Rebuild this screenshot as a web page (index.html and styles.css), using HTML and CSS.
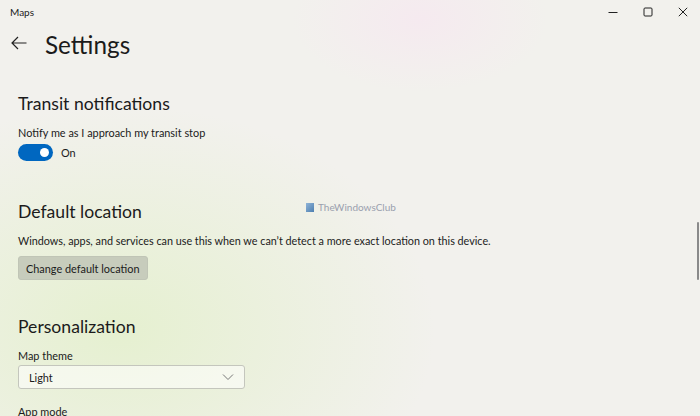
FILE: index.html
```html
<!DOCTYPE html>
<html>

<head lang="en">
    <meta charset="UTF-8">
    <title>Maps</title>
    <link rel="stylesheet" href="styles.css">
</head>

<body>
<div class="window">
    <!-- 标题栏 -->
    <div class="titlebar">
        <span class="app-name">Maps</span>
        <div class="controls">
            <span class="ctl">
                <svg width="10" height="10" viewBox="0 0 10 10"><path d="M0.5 5.5h9" stroke="#222" stroke-width="1"/></svg>
            </span>
            <span class="ctl">
                <svg width="10" height="10" viewBox="0 0 10 10"><rect x="1" y="1" width="8" height="8" rx="1" fill="none" stroke="#222" stroke-width="1"/></svg>
            </span>
            <span class="ctl">
                <svg width="10" height="10" viewBox="0 0 10 10"><path d="M0.8 0.8l8.4 8.4M9.2 0.8l-8.4 8.4" stroke="#222" stroke-width="1"/></svg>
            </span>
        </div>
    </div>

    <!-- 页头 -->
    <div class="header">
        <svg class="back" width="16" height="14" viewBox="0 0 16 14">
            <path d="M15.5 7H1M7 1L1 7l6 6" fill="none" stroke="#222" stroke-width="1.2"/>
        </svg>
        <h1>Settings</h1>
    </div>

    <div class="content">
        <h2 class="first">Transit notifications</h2>
        <p class="label">Notify me as I approach my transit stop</p>
        <div class="toggle-row">
            <span class="toggle"><span class="knob"></span></span>
            <span>On</span>
        </div>

        <h2 class="loc">Default location</h2>
        <p class="desc">Windows, apps, and services can use this when we can’t detect a more exact location on this device.</p>
        <button class="btn">Change default location</button>

        <h2 class="pers">Personalization</h2>
        <p class="label">Map theme</p>
        <div class="select">
            <span>Light</span>
            <svg width="12" height="8" viewBox="0 0 12 8"><path d="M1 1.5l5 5 5-5" fill="none" stroke="#777" stroke-width="1"/></svg>
        </div>
        <p class="label next">App mode</p>
    </div>

    <!-- 水印 -->
    <div class="watermark">
        <span class="wm-icon"></span>
        <span>TheWindowsClub</span>
    </div>

    <div class="scrollbar"></div>
</div>
</body>

</html>
```

FILE: styles.css
```css
* {
    padding: 0;
    margin: 0;
    box-sizing: border-box;
}

body {
    width: 700px;
    height: 416px;
    overflow: hidden;
    font-family: Lato, "Noto Sans", sans-serif;
    color: #1b1b1b;
}

.window {
    position: relative;
    width: 700px;
    height: 416px;
    overflow: hidden;
    background:
        radial-gradient(ellipse 420px 300px at 120px 330px, rgba(228, 240, 205, 0.9), rgba(228, 240, 205, 0) 75%),
        radial-gradient(ellipse 160px 90px at 420px 20px, rgba(246, 232, 240, 0.8), rgba(246, 232, 240, 0) 80%),
        #f2f1ed;
}

.titlebar {
    display: flex;
    justify-content: space-between;
    align-items: center;
    height: 24px;
}

.app-name {
    font-size: 10px;
    padding-left: 10px;
}

.controls {
    display: flex;
}

.ctl {
    display: flex;
    justify-content: center;
    align-items: center;
    width: 35px;
    height: 24px;
}

.header {
    display: flex;
    align-items: center;
    height: 40px;
    padding-left: 11px;
}

.back {
    margin-top: -2px;
}

.header h1 {
    font-weight: 400;
    font-size: 24.3px;
    margin-left: 18px;
}

.content {
    padding-left: 18px;
}

h2 {
    font-weight: 400;
    font-size: 17.6px;
    line-height: 24px;
}

h2.first {
    margin-top: 28px;
}

h2.loc {
    margin-top: 39px;
}

h2.pers {
    margin-top: 35px;
}

.label {
    font-size: 10.9px;
    line-height: 16px;
    margin-top: 9px;
}

.toggle-row {
    display: flex;
    align-items: center;
    font-size: 10.9px;
    margin-top: 3px;
}

.toggle {
    display: flex;
    align-items: center;
    justify-content: flex-end;
    width: 35px;
    height: 17px;
    border-radius: 9px;
    background: #0067c0;
    padding-right: 4px;
    margin-right: 8px;
}

.knob {
    width: 9px;
    height: 9px;
    border-radius: 50%;
    background: #fff;
}

.desc {
    font-size: 10.8px;
    line-height: 16px;
    margin-top: 9px;
}

.btn {
    display: block;
    margin-top: 7px;
    height: 24px;
    padding: 0 7px;
    border: 1px solid #c0c5b6;
    border-radius: 3px;
    background: #c7ccbc;
    font-family: inherit;
    font-size: 10.9px;
    color: #1b1b1b;
}

.select {
    display: flex;
    justify-content: space-between;
    align-items: center;
    width: 227px;
    height: 24px;
    margin-top: 1px;
    padding: 0 10px;
    border: 1px solid #c4c6bd;
    border-radius: 3px;
    background: rgba(255, 255, 255, 0.55);
    font-size: 10.9px;
}

.label.next {
    margin-top: 15px;
}

.watermark {
    position: absolute;
    left: 306px;
    top: 201px;
    display: flex;
    align-items: center;
    font-size: 10px;
    color: #9aa0ae;
}

.wm-icon {
    width: 8px;
    height: 9px;
    margin-right: 4px;
    background: linear-gradient(135deg, #8fb4d8, #4d7fb0);
}

.scrollbar {
    position: absolute;
    right: 1px;
    top: 222px;
    width: 2px;
    height: 58px;
    border-radius: 1px;
    background: #8a8a8a;
}
```
